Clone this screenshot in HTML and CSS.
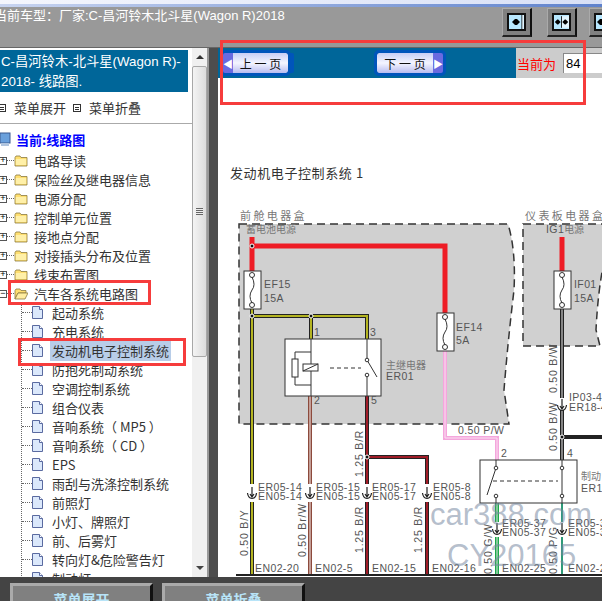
FILE: index.html
```html
<!DOCTYPE html>
<html lang="zh-CN">
  <head>
    <meta charset="UTF-8" />
    <title>线路图</title>
    <link rel="stylesheet" href="styles.css">
  </head>
  <body>
    <svg class="defs" width="0" height="0">
      <symbol id="folder" viewBox="0 0 14 12">
        <path d="M1 2.5 L2 1 H6 L7 2.5 H13 V11 H1 Z" fill="#ffdf70" stroke="#8a7a40" stroke-width="0.8"/>
        <path d="M1.8 4 H12.2 V10 H1.8 Z" fill="#fff0a8"/>
      </symbol>
      <symbol id="folder-open" viewBox="0 0 14 12">
        <path d="M1 2.5 L2 1 H6 L7 2.5 H12 V5 H4 L1 11 Z" fill="#ffdf70" stroke="#8a7a40" stroke-width="0.8"/>
        <path d="M4 5 H14 L11 11 H1 Z" fill="#ffeda0" stroke="#8a7a40" stroke-width="0.8"/>
      </symbol>
      <symbol id="doc" viewBox="0 0 11 13">
        <path d="M0.5 0.5 H7.5 L10.5 3.5 V12.5 H0.5 Z" fill="#dbe8fb" stroke="#5a6aa0"/>
        <path d="M7.5 0.5 V3.5 H10.5" fill="#fff" stroke="#5a6aa0"/>
      </symbol>
      <symbol id="conn" viewBox="-6 -7 12 14">
        <path d="M0 -6 V4 M-2 1 L0 4 L2 1 M-4.5 0 Q-4 5 0 5.5 Q4 5 4.5 0" fill="none" stroke="#222" stroke-width="1.2"/>
      </symbol>
    </svg>

    <div class="top-strip"></div>

    <div class="toolbar">
      <div class="car-title">当前车型：厂家:C-昌河铃木北斗星(Wagon R)2018</div>
      <div class="tool-btn btn-one">
        <div class="tool-face">
          <svg width="15" height="14" viewBox="0 0 15 14"><path d="M3 7 L6 4 H8 L11 7 L8 10 H6 Z" fill="#000"/><path d="M13 0 V14" stroke="#000"/><path d="M14 0 V14" stroke="#fff"/></svg>
        </div>
      </div>
      <div class="tool-btn btn-two">
        <div class="tool-face">
          <svg width="18" height="14" viewBox="0 0 18 14"><path d="M1 7 L4 4 H5 L8 7 L5 10 H4 Z" fill="#000"/><rect x="9" y="0" width="9" height="14" fill="#fff" fill-opacity="0.6"/><path d="M9 0 V14" stroke="#000"/><path d="M17 7 L14 4 H13 L10 7 L13 10 H14 Z" fill="#000"/></svg>
        </div>
      </div>
      <div class="tool-btn">
        <div class="tool-face">
          <svg width="15" height="14" viewBox="0 0 15 14"><path d="M1 7 L4 4 H6 L9 7 L6 10 H4 Z" fill="#000"/></svg>
        </div>
      </div>
    </div>

    <div class="main">
      <div class="side">
        <div class="side-body">
          <div class="side-head">C-昌河铃木-北斗星(Wagon R)-<br />2018- 线路图.</div>
          <div class="menu-links">
            <span class="menu-box first"></span><span class="menu-text">菜单展开</span>
            <span class="menu-box"></span><span class="menu-text">菜单折叠</span>
          </div>
          <div class="current">
            <svg width="11" height="15" viewBox="0 0 11 15"><rect x="0" y="1" width="10" height="10" fill="#6aa0dc" stroke="#3a5a90"/><rect x="1" y="11" width="8" height="3" fill="#b0c4de"/></svg>
            当前:线路图
          </div>
          <div class="tree">
            <div class="row"><span class="plus">+</span><span class="dots"></span><svg class="ico-folder"><use href="#folder"/></svg><span class="label">电路导读</span></div>
            <div class="row"><span class="plus">+</span><span class="dots"></span><svg class="ico-folder"><use href="#folder"/></svg><span class="label">保险丝及继电器信息</span></div>
            <div class="row"><span class="plus">+</span><span class="dots"></span><svg class="ico-folder"><use href="#folder"/></svg><span class="label">电源分配</span></div>
            <div class="row"><span class="plus">+</span><span class="dots"></span><svg class="ico-folder"><use href="#folder"/></svg><span class="label">控制单元位置</span></div>
            <div class="row"><span class="plus">+</span><span class="dots"></span><svg class="ico-folder"><use href="#folder"/></svg><span class="label">接地点分配</span></div>
            <div class="row"><span class="plus">+</span><span class="dots"></span><svg class="ico-folder"><use href="#folder"/></svg><span class="label">对接插头分布及位置</span></div>
            <div class="row"><span class="plus">+</span><span class="dots"></span><svg class="ico-folder"><use href="#folder"/></svg><span class="label">线束布置图</span></div>
            <div class="row"><span class="plus">−</span><span class="dots"></span><svg class="ico-folder"><use href="#folder-open"/></svg><span class="label">汽车各系统电路图</span></div>
            <div class="children">
              <div class="row child"><span class="dots"></span><svg class="ico-doc"><use href="#doc"/></svg><span class="label">起动系统</span></div>
              <div class="row child"><span class="dots"></span><svg class="ico-doc"><use href="#doc"/></svg><span class="label">充电系统</span></div>
              <div class="row child"><span class="dots"></span><svg class="ico-doc"><use href="#doc"/></svg><span class="label selected">发动机电子控制系统</span></div>
              <div class="row child"><span class="dots"></span><svg class="ico-doc"><use href="#doc"/></svg><span class="label">防抱死制动系统</span></div>
              <div class="row child"><span class="dots"></span><svg class="ico-doc"><use href="#doc"/></svg><span class="label">空调控制系统</span></div>
              <div class="row child"><span class="dots"></span><svg class="ico-doc"><use href="#doc"/></svg><span class="label">组合仪表</span></div>
              <div class="row child"><span class="dots"></span><svg class="ico-doc"><use href="#doc"/></svg><span class="label">音响系统（ MP5 ）</span></div>
              <div class="row child"><span class="dots"></span><svg class="ico-doc"><use href="#doc"/></svg><span class="label">音响系统（ CD ）</span></div>
              <div class="row child"><span class="dots"></span><svg class="ico-doc"><use href="#doc"/></svg><span class="label">EPS</span></div>
              <div class="row child"><span class="dots"></span><svg class="ico-doc"><use href="#doc"/></svg><span class="label">雨刮与洗涤控制系统</span></div>
              <div class="row child"><span class="dots"></span><svg class="ico-doc"><use href="#doc"/></svg><span class="label">前照灯</span></div>
              <div class="row child"><span class="dots"></span><svg class="ico-doc"><use href="#doc"/></svg><span class="label">小灯、牌照灯</span></div>
              <div class="row child"><span class="dots"></span><svg class="ico-doc"><use href="#doc"/></svg><span class="label">前、后雾灯</span></div>
              <div class="row child"><span class="dots"></span><svg class="ico-doc"><use href="#doc"/></svg><span class="label">转向灯&amp;危险警告灯</span></div>
              <div class="row child"><span class="dots"></span><svg class="ico-doc"><use href="#doc"/></svg><span class="label">制动灯</span></div>
            </div>
          </div>
        </div>
        <div class="scrollbar">
          <div class="sb-arrow up"></div>
          <div class="sb-thumb"><span class="sb-grip"></span></div>
          <div class="sb-track"></div>
          <div class="sb-arrow down"></div>
        </div>
      </div>

      <div class="divider"></div>

      <div class="content">
        <div class="pager">
          <div class="pager-bar">
            <div class="page-btn prev"><span class="page-arrow">◀</span><span class="page-text">上 一 页</span></div>
            <div class="page-btn next"><span class="page-text">下 一 页</span><span class="page-arrow">▶</span></div>
          </div>
          <div class="page-now">
            <span class="now-text">当前为</span>
            <input class="now-input" type="text" value="84" />
          </div>
        </div>

        <svg class="diagram" width="384" height="499" viewBox="218 78 384 499">
          <text class="t-title" x="230" y="178">发动机电子控制系统 1</text>

          <!-- boxes -->
          <path class="zone" d="M239 224 H508 Q516 250 514 290 Q508 340 504 390 L509 424 H239 Z"/>
          <path class="zone" d="M523 224 H604 V262 Q598 290 596 330 L600 346 H523 Z"/>
          <text class="t-cn" x="240" y="220">前舱电器盒</text>
          <text class="t-cn" x="525" y="220">仪表板电器盒</text>
          <text class="t-cn-sm" x="246" y="233">蓄电池电源</text>
          <text class="t" x="546" y="233">IG1<tspan class="t-cn-sm">电源</tspan></text>

          <!-- red feed -->
          <path class="w-red" d="M252 237 V272 M252 246 H445 V314 M562 237 V272"/>

          <!-- pink -->
          <path class="w-pink" d="M445 351 V438 H497 V460"/>
          <path class="w-pink-in" d="M445 351 V438 H497 V460"/>

          <!-- yellow -->
          <path class="w-black" d="M252 309 V484 M252 502 V575 M252 316 H367 V339 M311 316 V339"/>
          <path class="w-yellow" d="M252 309 V484 M252 502 V575 M252 316 H367 V339 M311 316 V339"/>

          <!-- brown -->
          <path class="w-brown" d="M310 396 V484 M310 502 V575"/>
          <path class="w-core" d="M310 396 V484 M310 502 V575"/>

          <!-- dark red -->
          <path class="w-black" d="M367 396 V484 M367 502 V575 M367 457 H427 V484 M427 502 V575"/>
          <path class="w-dred" d="M367 396 V484 M367 502 V575 M367 457 H427 V484 M427 502 V575"/>

          <!-- black -->
          <path class="w-black" d="M562 309 V398 M562 410 V460 M562 437 H604"/>
          <path class="w-core-thin" d="M562 309 V398 M562 410 V460"/>

          <!-- green -->
          <path class="w-green" d="M497 503 V522 M497 537 V575"/>
          <path class="w-core-thin" d="M497 503 V522 M497 537 V575"/>
          <path class="w-thin-green" d="M562 503 V522 M562 537 V575"/>

          <!-- ground line -->
          <path class="ground" d="M236 575 H604"/>

          <!-- fuses -->
          <g class="part">
            <rect x="244" y="271" width="17" height="38"/>
            <circle cx="252" cy="275" r="2.5"/><circle cx="252" cy="305" r="2.5"/>
            <path d="M252 277 Q256 285 252 290 Q248 296 252 303"/>
            <rect x="437" y="313" width="17" height="38"/>
            <circle cx="445" cy="317" r="2.5"/><circle cx="445" cy="347" r="2.5"/>
            <path d="M445 319 Q449 327 445 332 Q441 338 445 345"/>
            <rect x="554" y="271" width="17" height="38"/>
            <circle cx="562" cy="275" r="2.5"/><circle cx="562" cy="305" r="2.5"/>
            <path d="M562 277 Q566 285 562 290 Q558 296 562 303"/>
          </g>

          <!-- main relay -->
          <g class="part">
            <rect x="285" y="339" width="96" height="57"/>
            <path d="M311 339 V396 M311 352 H295 V385 H311"/>
            <rect x="292" y="359" width="6" height="18"/>
            <rect x="303" y="364" width="15" height="7"/>
            <path d="M303 371 L318 364"/>
            <path class="dash" d="M330 368 H361"/>
            <path d="M367 339 V360 L377 377 M367 375 V396"/>
            <circle cx="367" cy="360" r="1.8"/><circle cx="367" cy="375" r="1.8"/>
          </g>

          <!-- brake relay -->
          <g class="part">
            <rect class="nofill" x="480" y="460" width="97" height="43"/>
            <path d="M496 460 V468 L487 495 M496 496 V503 M562 460 V468 L562 496 V503"/>
            <circle cx="496" cy="468" r="1.8"/><circle cx="496" cy="496" r="1.8"/>
            <circle cx="562" cy="468" r="1.8"/><circle cx="562" cy="496" r="1.8"/>
            <path class="dash" d="M493 481 H558"/>
          </g>

          <!-- nodes -->
          <g class="node">
            <circle cx="252" cy="246" r="2"/><circle cx="252" cy="316" r="2"/><circle cx="311" cy="316" r="2"/>
            <circle cx="367" cy="457" r="2"/><circle cx="562" cy="437" r="2"/>
          </g>

          <!-- connectors -->
          <use href="#conn" x="246" y="486" width="12" height="14"/>
          <use href="#conn" x="304" y="486" width="12" height="14"/>
          <use href="#conn" x="361" y="486" width="12" height="14"/>
          <use href="#conn" x="421" y="486" width="12" height="14"/>
          <use href="#conn" x="491" y="522" width="12" height="14"/>
          <use href="#conn" x="556" y="522" width="12" height="14"/>
          <use href="#conn" x="556" y="398" width="12" height="14"/>

          <!-- labels -->
          <text class="t" x="264" y="288">EF15</text><text class="t" x="264" y="302">15A</text>
          <text class="t" x="456" y="331">EF14</text><text class="t" x="456" y="344">5A</text>
          <text class="t" x="574" y="288">IF01</text><text class="t" x="574" y="302">15A</text>
          <text class="t" x="314" y="336">1</text><text class="t" x="370" y="336">3</text>
          <text class="t" x="314" y="404">2</text><text class="t" x="371" y="404">5</text>
          <text class="t-cn-sm" x="386" y="369">主继电器</text><text class="t" x="386" y="380">ER01</text>
          <text class="t" x="501" y="457">2</text><text class="t" x="567" y="457">4</text>
          <text class="t-cn-sm" x="581" y="480">制动</text><text class="t" x="581" y="492">ER1</text>
          <text class="t" x="458" y="434">0.50 P/W</text>

          <text class="t" x="258" y="491">ER05-14</text><text class="t" x="258" y="500">EN05-14</text>
          <text class="t" x="316" y="491">ER05-15</text><text class="t" x="316" y="500">EN05-15</text>
          <text class="t" x="372" y="491">ER05-17</text><text class="t" x="372" y="500">EN05-17</text>
          <text class="t" x="433" y="491">ER05-8</text><text class="t" x="433" y="500">EN05-8</text>
          <text class="t" x="502" y="527">ER05-37</text><text class="t" x="502" y="536">EN05-37</text>
          <text class="t" x="568" y="527">ER05-37</text><text class="t" x="568" y="536">EN05-37</text>
          <text class="t" x="569" y="401">IP03-4</text><text class="t" x="569" y="411">ER18-4</text>

          <text class="t" x="255" y="572">EN02-20</text>
          <text class="t" x="315" y="572">EN02-5</text>
          <text class="t" x="372" y="572">EN02-15</text>
          <text class="t" x="432" y="572">EN02-16</text>
          <text class="t" x="502" y="572">EN02-25</text>
          <text class="t" x="568" y="572">EN02-26</text>

          <text class="t t-wide" transform="translate(248 556) rotate(-90)">0.50 B/Y</text>
          <text class="t t-wide" transform="translate(306 557) rotate(-90)">0.50 Br/W</text>
          <text class="t t-wide" transform="translate(363 553) rotate(-90)">1.25 B/R</text>
          <text class="t t-wide" transform="translate(363 477) rotate(-90)">1.25 B/R</text>
          <text class="t t-wide" transform="translate(422 553) rotate(-90)">1.25 B/R</text>
          <text class="t t-wide" transform="translate(557 393) rotate(-90)">0.50 B/W</text>
          <text class="t t-wide" transform="translate(557 451) rotate(-90)">0.50 B/W</text>
          <text class="t t-wide" transform="translate(492 574) rotate(-90)">0.50 G/W</text>
          <text class="t t-wide" transform="translate(557 574) rotate(-90)">0.50 P/G</text>

          <text class="mark" x="430" y="525">car388.com</text>
          <text class="mark" x="447" y="566">CY20165</text>
        </svg>
      </div>
    </div>

    <div class="bottom">
      <div class="bottom-btn">菜单展开</div>
      <div class="bottom-btn">菜单折叠</div>
    </div>

    <div class="callout pager-mark"></div>
    <div class="callout folder-mark"></div>
    <div class="callout item-mark"></div>
  </body>
</html>
```
FILE: styles.css
```css
body {
  position: relative;
  width: 602px;
  height: 601px;
  margin: 0;
  overflow: hidden;
  font-family: "Noto Sans CJK SC", "Liberation Sans", sans-serif;
  background-color: #444;
}
.defs {
  position: absolute;
}
.top-strip {
  height: 4px;
  border-bottom: 3px solid;
  border-image: linear-gradient(90deg, #c8d4f0, #5f82cc) 1;
  background: linear-gradient(90deg, #f4f6fd, #d8e0f6);
}

/* toolbar */
.toolbar {
  display: flex;
  height: 40px;
  background-color: #999;
  border-bottom: 1px solid #666;
}
.car-title {
  flex: 1;
  margin-left: -6px;
  padding-top: 1px;
  font-family: "Liberation Sans", "Noto Sans CJK SC", sans-serif;
  font-size: 13px;
  line-height: 16px;
  color: #fff;
  white-space: nowrap;
}
.tool-btn {
  flex-shrink: 0;
  box-sizing: border-box;
  width: 30px;
  height: 29px;
  margin: 1px -17px 0 0;
  padding: 4px;
  background-color: #808080;
  border-top: 1px solid #aaa;
  border-left: 1px solid #aaa;
  border-right: 2px solid #111;
  border-bottom: 2px solid #222;
}
.btn-one {
  margin-right: 15px;
}
.btn-two {
  margin-right: 12px;
}
.tool-face {
  display: flex;
  align-items: center;
  justify-content: center;
  height: 100%;
  box-sizing: border-box;
  background-color: #b8e8ff;
  border: 2px solid #111;
  overflow: hidden;
}

/* main area */
.main {
  display: flex;
  height: 529px;
}
.side {
  display: flex;
  width: 209px;
  flex-shrink: 0;
  box-sizing: border-box;
  background-color: #fff;
  border-right: 2px solid #999;
  overflow: hidden;
}
.side-body {
  width: 192px;
  flex-shrink: 0;
  background-color: #fff;
  overflow: hidden;
}
.side-head {
  width: 188px;
  height: 42px;
  margin-top: 2px;
  padding: 2px 0 0 1px;
  box-sizing: border-box;
  background-color: #006699;
  color: #fff;
  font-family: "Liberation Sans", "Noto Sans CJK SC", sans-serif;
  font-size: 13.3px;
  line-height: 20px;
}
.menu-links {
  display: flex;
  align-items: center;
  height: 31px;
  border-bottom: 1px solid #aaa;
  font-size: 13px;
  color: #333;
}
.menu-box {
  box-sizing: border-box;
  width: 8px;
  height: 8px;
  margin-left: 7px;
  border: 1px solid #333;
  background: repeating-linear-gradient(#333 0 1px, #fff 1px 2px);
  background-clip: content-box;
  padding: 1px;
}
.menu-box.first {
  margin-left: -2px;
}
.menu-text {
  margin-left: 8px;
}
.current {
  display: flex;
  align-items: center;
  gap: 5px;
  height: 27px;
  padding-top: 4px;
  box-sizing: border-box;
  color: #0000ff;
  font-size: 13px;
  font-weight: 700;
}

/* tree */
.row {
  display: flex;
  align-items: center;
  height: 19px;
  font-size: 13px;
  color: #333;
  white-space: nowrap;
}
.plus {
  box-sizing: border-box;
  display: flex;
  align-items: center;
  justify-content: center;
  width: 8px;
  height: 8px;
  margin-left: -1px;
  background-color: #fff;
  border: 1px solid #555;
  font-family: "Liberation Mono", monospace;
  font-size: 9px;
  line-height: 6px;
  color: #000;
}
.dots {
  width: 7px;
  border-top: 1px dotted #666;
}
.ico-folder {
  width: 14px;
  height: 12px;
  margin-right: 6px;
}
.children {
  margin-left: 21px;
  border-left: 1px dotted #666;
}
.child .dots {
  width: 10px;
}
.ico-doc {
  width: 11px;
  height: 13px;
  margin-right: 9px;
}
.selected {
  margin-left: -2px;
  padding: 0 2px;
  line-height: 21px;
  background-color: #b8cde8;
}

/* scrollbar */
.scrollbar {
  display: flex;
  flex-direction: column;
  width: 15px;
  background-color: #f0f0f0;
}
.sb-arrow {
  display: flex;
  align-items: center;
  justify-content: center;
  height: 18px;
}
.sb-arrow.up::before,
.sb-arrow.down::before {
  content: "";
  border-left: 4px solid transparent;
  border-right: 4px solid transparent;
}
.sb-arrow.up::before {
  border-bottom: 4px solid #333;
}
.sb-arrow.down::before {
  border-top: 4px solid #444;
}
.sb-thumb {
  display: flex;
  align-items: center;
  justify-content: center;
  height: 291px;
  box-sizing: border-box;
  background: linear-gradient(90deg, #f4f4f4, #dcdcdc);
  border: 1px solid #a8a8a8;
  border-radius: 2px;
}
.sb-grip {
  width: 7px;
  height: 7px;
  background: repeating-linear-gradient(#666 0 1px, #eee 1px 2px);
}
.sb-track {
  flex: 1;
}
.divider {
  width: 9px;
  flex-shrink: 0;
  background-color: #4d4d4d;
}

/* drawing page */
.content {
  flex: 1;
  min-width: 0;
  background-color: #fff;
  overflow: hidden;
}
.pager {
  display: flex;
  height: 30px;
}
.pager-bar {
  display: flex;
  align-items: center;
  width: 298px;
  flex-shrink: 0;
  background-color: #006699;
}
.page-btn {
  display: flex;
  align-items: center;
  box-sizing: border-box;
  height: 20px;
  background: linear-gradient(#c8cef5, #f4f5ff 50%, #b8bcf0);
  border-radius: 2px;
  font-size: 12px;
  color: #111;
  outline: 3px solid #0055bb;
}
.prev {
  width: 65px;
  margin-left: 5px;
  box-shadow: 6px 0 0 #0055bb;
}
.next {
  width: 66px;
  margin-left: 89px;
}
.page-arrow {
  display: flex;
  align-items: center;
  justify-content: center;
  width: 10px;
  height: 100%;
  background-color: #6a6ae0;
  color: #fff;
  font-size: 10px;
}
.page-text {
  flex: 1;
  text-align: center;
}
.page-now {
  display: flex;
  flex: 1;
  align-items: center;
  gap: 7px;
  padding-left: 1px;
  background-color: #ccc;
}
.now-text {
  font-size: 13px;
  color: #f00;
  white-space: nowrap;
}
.now-input {
  width: 50px;
  height: 20px;
  box-sizing: border-box;
  padding: 0 2px;
  border: 0;
  border-left: 1px solid #888;
  border-top: 1px solid #888;
  background-color: #fff;
  font-family: "Liberation Sans", sans-serif;
  font-size: 13px;
  color: #000;
}
.diagram {
  display: block;
}
.t-title {
  font-family: "Noto Sans CJK SC", sans-serif;
  font-size: 13px;
  letter-spacing: 0.6px;
  fill: #333;
}
.zone {
  fill: #d0d0d0;
  stroke: #333;
  stroke-width: 1.5;
  stroke-dasharray: 8 5;
}
.t {
  font-family: "Liberation Sans", sans-serif;
  font-size: 10.5px;
  letter-spacing: 0.4px;
  fill: #555;
}
.t-wide {
  letter-spacing: 0.8px;
}
.t-cn {
  font-family: "Noto Sans CJK SC", sans-serif;
  font-size: 11px;
  letter-spacing: 2.4px;
  fill: #777;
}
.t-cn-sm {
  font-family: "Noto Sans CJK SC", sans-serif;
  font-size: 10px;
  letter-spacing: 0;
  fill: #777;
}
.diagram path {
  fill: none;
}
.diagram .zone {
  fill: #d0d0d0;
}
.w-red {
  stroke: #ee1c25;
  stroke-width: 5;
}
.w-pink {
  stroke: #f4a6dc;
  stroke-width: 4;
}
.w-pink-in {
  stroke: #fbe0f2;
  stroke-width: 1;
}
.w-black {
  stroke: #222;
  stroke-width: 4;
}
.w-yellow {
  stroke: #b4b422;
  stroke-width: 2;
}
.w-brown {
  stroke: #8c4a3c;
  stroke-width: 4;
}
.w-core {
  stroke: #e8d8d4;
  stroke-width: 1.2;
}
.w-core-thin {
  stroke: #e8e8e8;
  stroke-width: 1;
}
.w-dred {
  stroke: #a01c28;
  stroke-width: 2;
}
.w-green {
  stroke: #1ca84a;
  stroke-width: 4;
}
.w-thin-green {
  stroke: #2e9a78;
  stroke-width: 2;
}
.ground {
  stroke: #222;
  stroke-width: 2;
}
.part rect,
.part circle {
  fill: #fff;
  stroke: #333;
  stroke-width: 1;
}
.part .nofill {
  fill: none;
}
.part path {
  stroke: #333;
  stroke-width: 1;
}
.part .dash {
  stroke-dasharray: 4 3;
}
.node circle {
  fill: #111;
  stroke: #fff;
  stroke-width: 1;
}
.mark {
  font-family: "Liberation Sans", sans-serif;
  font-size: 31px;
  fill: #76889f;
  fill-opacity: 0.55;
}

/* bottom buttons */
.bottom {
  display: flex;
  gap: 9px;
  height: 24px;
  padding: 6px 0 0 10px;
  box-sizing: border-box;
  background-color: #444;
}
.bottom-btn {
  box-sizing: border-box;
  width: 143px;
  height: 30px;
  padding-top: 3px;
  background-color: #808080;
  border-top: 3px solid #aaa;
  border-left: 3px solid #aaa;
  border-right: 3px solid #111;
  text-align: center;
  font-size: 14px;
  font-weight: 700;
  color: #b8e4f8;
}

/* red marks drawn over the screenshot */
.callout {
  position: absolute;
  box-sizing: border-box;
  border: 3px solid #f63c3c;
}
.pager-mark {
  left: 220px;
  top: 40px;
  width: 366px;
  height: 65px;
}
.folder-mark {
  left: 8px;
  top: 280px;
  width: 143px;
  height: 25px;
}
.item-mark {
  left: 18px;
  top: 338px;
  width: 168px;
  height: 28px;
}
```
